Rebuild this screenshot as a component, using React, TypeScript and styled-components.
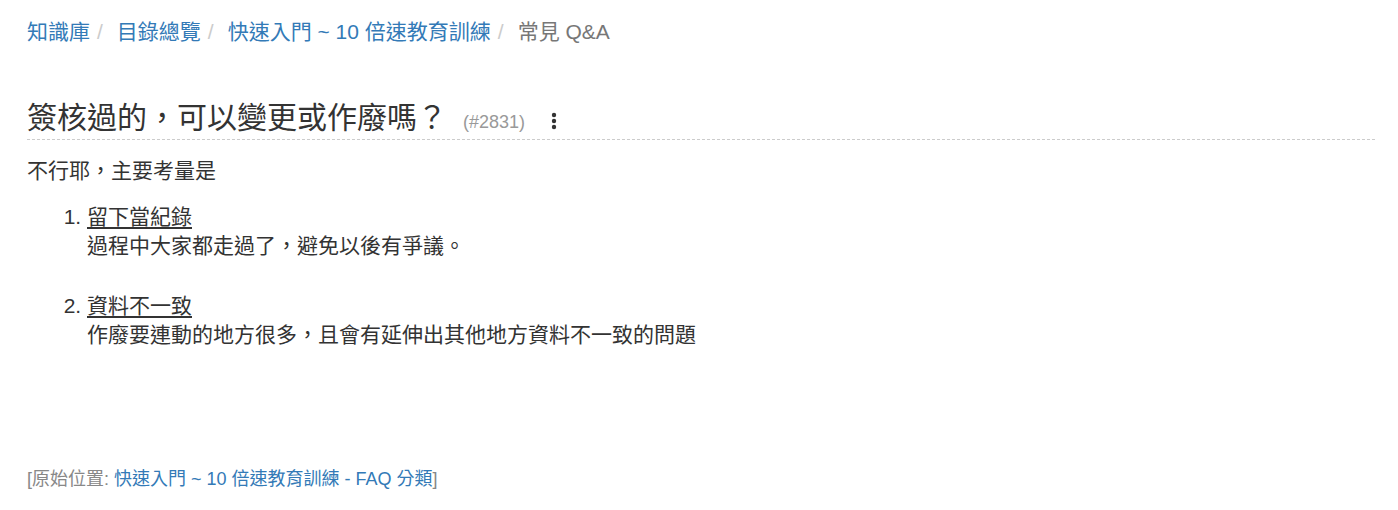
import React from 'react';
import styled, { createGlobalStyle } from 'styled-components';

const GlobalStyle = createGlobalStyle`
  html, body {
    margin: 0;
    padding: 0;
    background: #fff;
  }
  body {
    font-family: "Liberation Sans", "Noto Sans CJK TC", Arial, sans-serif;
    font-size: 21px;
    line-height: 29px;
    color: #333;
  }
`;

const Page = styled.div`
  padding: 14px 23px 0 27px;
`;

const Breadcrumb = styled.ol`
  list-style: none;
  margin: 0;
  padding: 0;
  display: flex;
  font-size: 21px;
  line-height: 36px;
`;

const Crumb = styled.li<{ active?: boolean }>`
  color: ${p => (p.active ? '#777' : '#337ab7')};

  &:not(:first-child)::before {
    content: '/';
    color: #ccc;
    padding: 0 14px 0 7px;
  }
`;

const Link = styled.a`
  color: #337ab7;
  text-decoration: none;
`;

const TitleRow = styled.div`
  display: flex;
  align-items: center;
  margin-top: 48px;
  padding-bottom: 1px;
  border-bottom: 1px dashed #ccc;
`;

const Title = styled.h3`
  margin: 0;
  font-size: 30px;
  font-weight: 400;
  line-height: 40px;
  color: #333;
`;

const Serial = styled.small`
  font-size: 18px;
  color: #999;
  margin-left: 16px;
  margin-top: 8px;
`;

const MenuButton = styled.span`
  display: inline-flex;
  margin-left: 26px;
  margin-top: 6px;
  color: #333;
`;

const Body = styled.div`
  padding-top: 16px;
`;

const Para = styled.p`
  margin: 0 0 17px;
`;

const List = styled.ol`
  margin: 0;
  padding-left: 60px;
`;

const Item = styled.li`
  margin-bottom: 31px;
`;

const Heading = styled.u`
  text-underline-offset: 3px;
`;

const Footer = styled.div`
  margin-top: 116px;
  font-size: 18px;
  color: #888;
`;

const KebabIcon = () => (
  <svg width="6" height="18" viewBox="0 0 6 18">
    <circle cx="3" cy="3" r="2.2" fill="currentColor" />
    <circle cx="3" cy="9" r="2.2" fill="currentColor" />
    <circle cx="3" cy="15" r="2.2" fill="currentColor" />
  </svg>
);

const App: React.FC = () => {
  return (
    <Page>
      <GlobalStyle />
      <Breadcrumb>
        <Crumb><Link href="#">知識庫</Link></Crumb>
        <Crumb><Link href="#">目錄總覽</Link></Crumb>
        <Crumb><Link href="#">快速入門 ~ 10 倍速教育訓練</Link></Crumb>
        <Crumb active>常見 Q&amp;A</Crumb>
      </Breadcrumb>

      <TitleRow>
        <Title>簽核過的，可以變更或作廢嗎？</Title>
        <Serial>(#2831)</Serial>
        <MenuButton><KebabIcon /></MenuButton>
      </TitleRow>

      <Body>
        <Para>不行耶，主要考量是</Para>
        <List>
          <Item>
            <Heading>留下當紀錄</Heading>
            <br />
            過程中大家都走過了，避免以後有爭議。
          </Item>
          <Item>
            <Heading>資料不一致</Heading>
            <br />
            作廢要連動的地方很多，且會有延伸出其他地方資料不一致的問題
          </Item>
        </List>
      </Body>

      <Footer>
        [原始位置: <Link href="#">快速入門 ~ 10 倍速教育訓練 - FAQ 分類</Link>]
      </Footer>
    </Page>
  );
};

export default App;
